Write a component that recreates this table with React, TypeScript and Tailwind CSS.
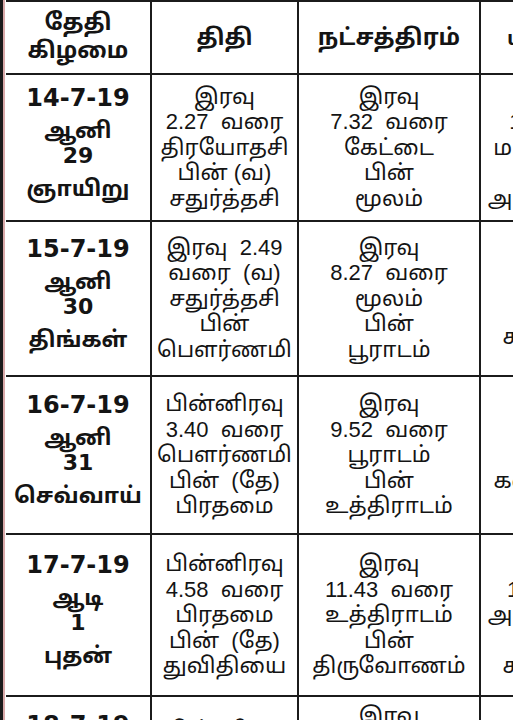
import React from "react";

type Row = {
  date: string;
  month: string;
  day: string;
  weekday: string;
  thithi: string[];
  star: string[];
  yogam: string[];
  height: string;
  // last row is cut by the page edge, so its cells sit from the top
  tops?: { date: string; thithi: string; star: string };
};

const rows: Row[] = [
  {
    date: "14-7-19",
    month: "ஆனி",
    day: "29",
    weekday: "ஞாயிறு",
    thithi: ["இரவு", "2.27  வரை", "திரயோதசி", "பின் (வ)", "சதுர்த்தசி"],
    star: ["இரவு", "7.32  வரை", "கேட்டை", "பின்", "மூலம்"],
    yogam: ["காலை", "10.15 வரை", "மரணயோகம்", "பின்", "அமிர்தயோகம்"],
    height: "h-[147px]",
  },
  {
    date: "15-7-19",
    month: "ஆனி",
    day: "30",
    weekday: "திங்கள்",
    thithi: ["இரவு  2.49", "வரை  (வ)", "சதுர்த்தசி", "பின்", "பௌர்ணமி"],
    star: ["இரவு", "8.27  வரை", "மூலம்", "பின்", "பூராடம்"],
    yogam: ["நாள்", "முழுவதும்", "", "காரியசித்தி"],
    height: "h-[155px]",
  },
  {
    date: "16-7-19",
    month: "ஆனி",
    day: "31",
    weekday: "செவ்வாய்",
    thithi: ["பின்னிரவு", "3.40  வரை", "பௌர்ணமி", "பின்  (தே)", "பிரதமை"],
    star: ["இரவு", "9.52  வரை", "பூராடம்", "பின்", "உத்திராடம்"],
    yogam: ["நாள்", "முழுவதும்", "கண்டயோகம்"],
    height: "h-[158px]",
  },
  {
    date: "17-7-19",
    month: "ஆடி",
    day: "1",
    weekday: "புதன்",
    thithi: ["பின்னிரவு", "4.58  வரை", "பிரதமை", "பின்  (தே)", "துவிதியை"],
    star: ["இரவு", "11.43  வரை", "உத்திராடம்", "பின்", "திருவோணம்"],
    yogam: ["காலை", "11.43  வரை", "அமிர்தயோகம்", "பின்", "காரியசித்தி"],
    height: "h-[162px]",
  },
  {
    date: "18-7-19",
    month: "ஆடி",
    day: "2",
    weekday: "வியாழன்",
    thithi: ["பின்னிரவு", "6.20  வரை", "துவிதியை", "பின்  (தே)", "திருதியை"],
    star: ["இரவு", "2.05  வரை", "திருவோணம்", "பின்", "அவிட்டம்"],
    yogam: ["நாள்", "முழுவதும்", "சித்தயோகம்"],
    height: "h-[160px]",
    tops: { date: "pt-[12px]", thithi: "pt-[20px]", star: "pt-[6px]" },
  },
];

const tamil = "font-['Liberation_Sans','Noto_Sans_Tamil','Lohit_Tamil',sans-serif]";
const digits = "font-['DejaVu_Sans','Noto_Sans_Tamil',sans-serif]";
const line = "border-[#1b1b1b]";

function Lines({ lines, className }: { lines: string[]; className?: string }) {
  return (
    <div className={`flex flex-col items-center text-center ${className ?? ""}`}>
      {lines.map((l, i) => (
        <span key={i} className="whitespace-pre leading-[25.5px]">
          {l || "\u00a0"}
        </span>
      ))}
    </div>
  );
}

export default function App() {
  return (
    <div className={`w-[513px] h-[720px] overflow-hidden bg-white text-[#141414] ${tamil}`}>
      <div className={`w-[700px] border-l-[3px] ${line}`}>
        <div className="border-l-2 border-[#d9a9a9] pl-px">
          {/* header */}
          <div className={`flex h-[75px] border-t-2 border-b-2 ${line}`}>
            <div className={`w-[146px] shrink-0 border-r-2 ${line} flex items-center justify-center pb-[3px]`}>
              <div className="flex flex-col items-center text-[23px] font-bold leading-[28px]">
                <span>தேதி</span>
                <span>கிழமை</span>
              </div>
            </div>
            <div className={`w-[147px] shrink-0 border-r-2 ${line} flex items-center justify-center text-[23px] font-bold`}>
              திதி
            </div>
            <div className={`w-[182px] shrink-0 border-r-2 ${line} flex items-center justify-center text-[23px] font-bold`}>
              நட்சத்திரம்
            </div>
            <div className="w-[180px] shrink-0 flex items-center justify-center text-[20px] font-bold">
              யமகண்டம்
            </div>
          </div>

          {rows.map((r) => (
            <div key={r.date} className={`flex ${r.height} border-b-2 ${line}`}>
              <div
                className={`w-[146px] shrink-0 border-r-2 ${line} flex flex-col items-center font-bold ${
                  r.tops ? `justify-start ${r.tops.date}` : "justify-center"
                }`}
              >
                <span className={`text-[24px] leading-[32px] ${digits} font-bold`}>{r.date}</span>
                <span className="text-[22px] leading-[33px]">{r.month}</span>
                <span className={`text-[22px] leading-[17px] ${digits} font-bold`}>{r.day}</span>
                <span className="text-[22px] leading-[50px]">{r.weekday}</span>
              </div>
              <div
                className={`w-[147px] shrink-0 border-r-2 ${line} flex justify-center ${
                  r.tops ? `items-start ${r.tops.thithi}` : "items-center"
                }`}
              >
                <Lines lines={r.thithi} className="text-[22px]" />
              </div>
              <div
                className={`w-[182px] shrink-0 border-r-2 ${line} flex justify-center ${
                  r.tops ? `items-start ${r.tops.star}` : "items-center"
                }`}
              >
                <Lines lines={r.star} className="text-[22px]" />
              </div>
              <div className="w-[180px] shrink-0 flex items-center justify-center">
                <Lines lines={r.yogam} className="text-[22px]" />
              </div>
            </div>
          ))}
        </div>
      </div>
    </div>
  );
}
